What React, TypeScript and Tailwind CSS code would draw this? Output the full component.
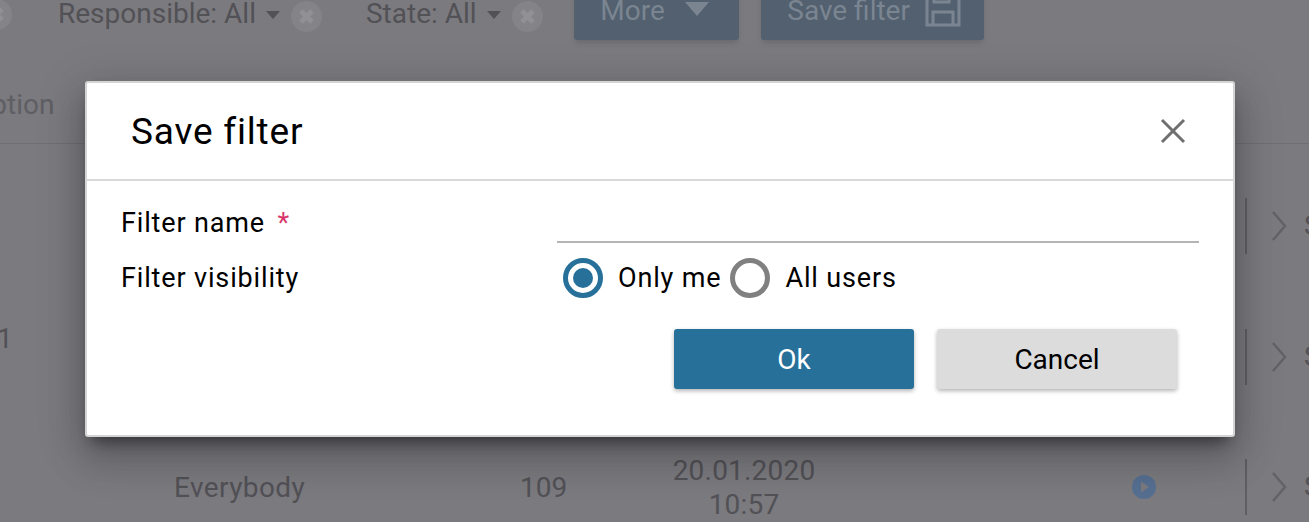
import React from 'react';

const ClearIcon = ({ className }: { className?: string }) => (
  <svg className={`shrink-0 ${className}`} width="31" height="31" viewBox="0 0 31 31">
    <circle cx="15.5" cy="15.5" r="15.5" fill="#848388" />
    <path d="M10 10l11 11M21 10L10 21" stroke="#919095" strokeWidth="5" />
  </svg>
);

const FilterChip = ({ label, className }: { label: string; className: string }) => (
  <div className={`flex items-center ${className}`}>
    <span className="text-[28px] leading-none text-[#525156]">{label}</span>
    <svg className="ml-[10px] mt-[2px]" width="14" height="8" viewBox="0 0 14 8">
      <path d="M0 0h14L7 8z" fill="#525156" />
    </svg>
    <ClearIcon className="ml-[11px] mt-[5px]" />
  </div>
);

const RowEnd = () => (
  <div className="flex items-center h-[56px] border-l-2 border-[#5f5e63]">
    <svg className="ml-[24px] shrink-0" width="16" height="32" viewBox="0 0 16 32" fill="none">
      <path d="M2 2l12 14L2 30" stroke="#636267" strokeWidth="2.5" />
    </svg>
    <span className="ml-[17px] text-[28px] text-[#525156]">S</span>
  </div>
);

const TableRow = ({ className, children }: { className: string; children?: React.ReactNode }) => (
  <div className={`grid grid-cols-[174px_346px_120px_208px_397px_90px] items-center h-[131px] ${className}`}>
    {children}
  </div>
);

const RadioOption = ({ label, checked }: { label: string; checked?: boolean }) => (
  <label className="flex items-center">
    <span
      className={`flex items-center justify-center w-[40px] h-[40px] rounded-full border-[5px] ${
        checked ? 'border-[#267099]' : 'border-[#808080]'
      }`}
    >
      {checked && <span className="w-[20px] h-[20px] rounded-full bg-[#267099]" />}
    </span>
    <span className="ml-[15px] pt-[2px] text-[27px] tracking-[0.85px] text-black">{label}</span>
  </label>
);

export default function App() {
  return (
    <div className="relative w-[1309px] h-[522px] overflow-hidden bg-[#7b7a7f] font-['Roboto',sans-serif]">
      {/* page behind the dialog */}
      <div className="flex items-start h-[40px]">
        <ClearIcon className="-ml-[19px] -mt-[1px]" />
        <FilterChip label="Responsible: All" className="ml-[46px] -mt-[4px]" />
        <FilterChip label="State: All" className="ml-[44px] -mt-[4px]" />
        <button className="flex items-center justify-center ml-[31px] -mt-[10px] pb-[8px] pr-[3px] w-[165px] h-[50px] rounded-[3px] bg-[#52606f] text-[28px] text-[#7a8591] shadow-md">
          More
          <svg className="ml-[20px] mt-[-4px]" width="24" height="14" viewBox="0 0 24 14">
            <path d="M0 0h24L12 14z" fill="#7a8591" />
          </svg>
        </button>
        <button className="flex items-center justify-center ml-[22px] -mt-[10px] pb-[8px] pl-[4px] w-[223px] h-[50px] rounded-[3px] bg-[#52606f] text-[28px] text-[#7a8591] shadow-md">
          Save filter
          <svg className="ml-[15px] mt-[-4px] shrink-0" width="36" height="36" viewBox="0 0 36 36" fill="none" stroke="#7a8591" strokeWidth="3">
            <path d="M2 2h25l7 7v25H2z" />
            <path d="M9 2v9h15V2M8 34V21h20v13" />
          </svg>
        </button>
      </div>
      <div className="h-[104px] flex items-center border-b border-[#706f74] pt-[26px]">
        <span className="-ml-[28px] text-[28px] text-[#5f5e63]">Option</span>
      </div>
      <TableRow className="mt-[16px]">
        <span className="col-start-6">
          <RowEnd />
        </span>
      </TableRow>
      <TableRow className="">
        <span className="-ml-[3px] mb-[36px] text-[28px] text-[#525156]">1</span>
        <span className="col-start-6">
          <RowEnd />
        </span>
      </TableRow>
      <TableRow className="-mt-[1px]">
        <span className="col-start-2 pt-[2px] text-[28px] tracking-[0.4px] text-[#525156]">Everybody</span>
        <span className="pt-[2px] text-[28px] text-[#525156]">109</span>
        <span className="pt-[2px] text-center text-[28px] leading-[34px] tracking-[0.2px] text-[#525156]">
          20.01.2020
          <br />
          10:57
        </span>
        <span className="pl-[284px]">
          <svg width="24" height="24" viewBox="0 0 24 24">
            <circle cx="12" cy="12" r="12" fill="#566f91" />
            <path d="M9 6.5l8 5.5-8 5.5z" fill="#7b7a7f" />
          </svg>
        </span>
        <RowEnd />
      </TableRow>

      {/* Save filter dialog */}
      <div className="absolute left-[85px] top-[81px] w-[1150px] h-[356px] rounded-[3px] border-2 border-[#d4d4d4] bg-white shadow-[0_11px_15px_-7px_rgba(0,0,0,0.5),0_24px_38px_3px_rgba(0,0,0,0.14),0_9px_46px_8px_rgba(0,0,0,0.12)]">
        <div className="flex items-center justify-between h-[98px] pl-[44px] pr-[47px] border-b-2 border-[#d9d9d9]">
          <h2 className="pt-[2px] text-[37px] font-normal tracking-[0.8px] text-black">Save filter</h2>
          <svg width="26" height="26" viewBox="0 0 26 26" fill="none">
            <path d="M2 2l22 22M24 2L2 24" stroke="#6f6f6f" strokeWidth="3" />
          </svg>
        </div>
        <div className="pl-[34px] pr-[34px]">
          <div className="flex h-[62px]">
            <div className="w-[436px] pt-[26px] text-[27px] leading-[32px] tracking-[0.85px] text-black">
              Filter name <span className="ml-[5px] text-[#d9366b]">*</span>
            </div>
            <div className="flex-1 border-b-2 border-[#b5b5b5]" />
          </div>
          <div className="flex items-center h-[71px] -mt-[1px]">
            <div className="w-[442px] pt-[2px] text-[27px] tracking-[0.85px] text-black">Filter visibility</div>
            <div className="flex items-center gap-[9px]">
              <RadioOption label="Only me" checked />
              <RadioOption label="All users" />
            </div>
          </div>
          <div className="flex justify-end gap-[23px] mt-[16px] pr-[22px]">
            <button className="w-[240px] h-[60px] pt-[2px] rounded-[3px] bg-[#267099] text-[28px] text-white shadow-[0_2px_4px_rgba(0,0,0,0.3)]">
              Ok
            </button>
            <button className="w-[240px] h-[60px] pt-[2px] rounded-[3px] bg-[#dcdcdc] text-[28px] text-black shadow-[0_2px_4px_rgba(0,0,0,0.3)]">
              Cancel
            </button>
          </div>
        </div>
      </div>
    </div>
  );
}
